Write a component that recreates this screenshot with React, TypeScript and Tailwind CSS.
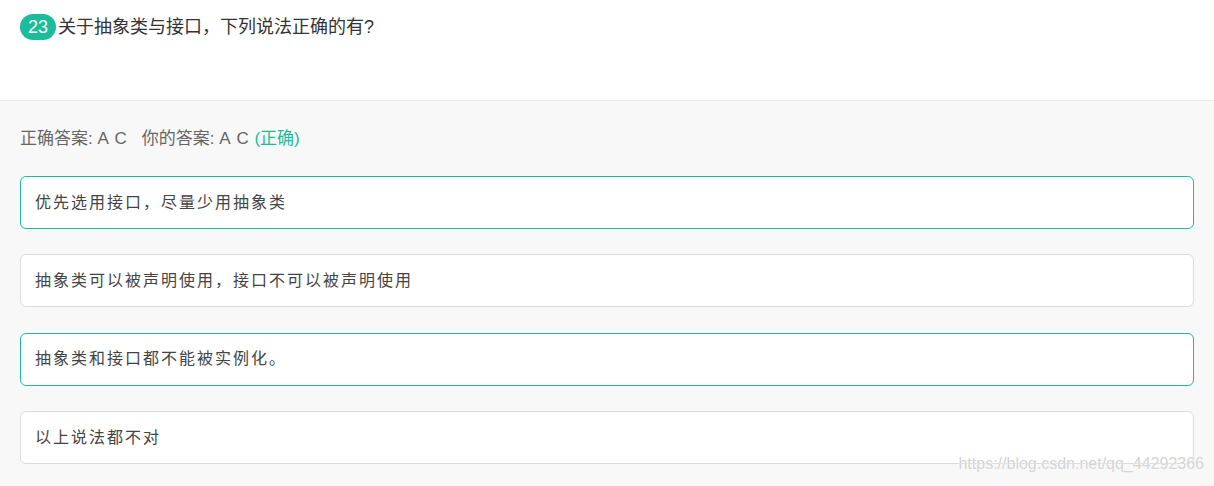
import React from 'react';

interface Option {
  text: string;
  correct: boolean;
}

const options: Option[] = [
  { text: '优先选用接口，尽量少用抽象类', correct: true },
  { text: '抽象类可以被声明使用，接口不可以被声明使用', correct: false },
  { text: '抽象类和接口都不能被实例化。', correct: true },
  { text: '以上说法都不对', correct: false },
];

const font = { fontFamily: '"Liberation Sans", "Noto Sans CJK SC", sans-serif' };

export default function App() {
  return (
    <div className="w-[1214px] h-[486px] bg-[#f8f8f8] relative overflow-hidden" style={font}>
      {/* Question header */}
      <div className="h-[101px] bg-white border-b border-[#ebebeb] px-5 pt-[14px]">
        <div className="flex items-center">
          <span className="inline-flex items-center justify-center h-[26px] min-w-[36px] px-1 rounded-full bg-[#1abc9c] text-white text-[18px] leading-none">
            23
          </span>
          <span className="ml-[2px] text-[18px] text-[#333] leading-[26px]">关于抽象类与接口，下列说法正确的有?</span>
        </div>
      </div>

      {/* Answer area */}
      <div className="px-5 pt-[26px]">
        <div className="text-[17px] text-[#666] leading-[24px]">
          正确答案: <span className="tracking-[1px]">A C</span>
          <span className="ml-[14px]">你的答案: </span>
          <span className="tracking-[1px]">A C</span>{' '}
          <span className="text-[#1abc9c]">(正确)</span>
        </div>

        <div className="mt-[25px] flex flex-col gap-[25.4px]">
          {options.map((o) => (
            <div
              key={o.text}
              className={`h-[53px] bg-white rounded-[6px] border flex items-center px-[14px] text-[16px] text-[#444] tracking-[2px] ${
                o.correct ? 'border-[#1abc9c]' : 'border-[#dcdcdc]'
              }`}
            >
              {o.text}
            </div>
          ))}
        </div>
      </div>

      {/* watermark */}
      <div
        className="absolute right-[10px] bottom-[14px] text-[16px] text-[#d4d4d4] leading-none"
        style={{ textShadow: '0 0 2px #fff, 0 0 1px #fff' }}
      >
        https://blog.csdn.net/qq_44292366
      </div>
    </div>
  );
}
